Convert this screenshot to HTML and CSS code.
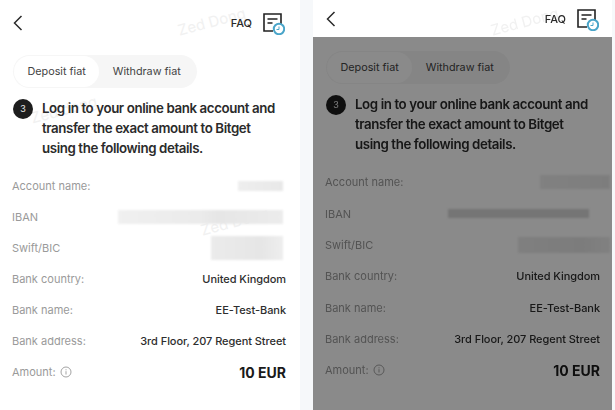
FILE: index.html
```html
<!DOCTYPE html>
<html lang="en">
<head>
  <meta charset="utf-8">
  <meta name="viewport" content="width=device-width, initial-scale=1">
  <title>Deposit fiat</title>
  <link rel="stylesheet" href="styles.css">
</head>
<body>
  <div class="screens">
    <div class="phone phone-plain">
      <span class="mark mark-a">Zed Dong</span>
      <span class="mark mark-b">Zed dong</span>
      <span class="mark mark-c">Zed Dong</span>
      <div class="header">
        <svg class="back" width="10" height="16" viewBox="0 0 10 16"><path d="M8.5 1 1.5 8l7 7" fill="none" stroke="#2a2a2a" stroke-width="1.5"/></svg>
        <div class="header-right">
          <span class="faq">FAQ</span>
          <svg class="orders" width="24" height="24" viewBox="0 0 24 24">
            <path d="M12 20H3V3h17v11" fill="none" stroke="#222" stroke-width="1.6"/>
            <path d="M6.5 8h10M6.5 12h5" fill="none" stroke="#222" stroke-width="1.6"/>
            <circle cx="18" cy="18" r="5.2" fill="#fff" stroke="#4aa5c9" stroke-width="2"/>
            <path d="M18 15.5v3h-2.5" fill="none" stroke="#4aa5c9" stroke-width="1"/>
          </svg>
        </div>
      </div>
      <div class="content">
        <div class="tabs">
          <div class="tab tab-active">Deposit fiat</div>
          <div class="tab">Withdraw fiat</div>
        </div>
        <div class="step">
          <span class="step-num">3</span>
          <h2>Log in to your online bank account and transfer the exact amount to Bitget using the following details.</h2>
        </div>
        <div class="details">
          <div class="row"><span class="label">Account name:</span><span class="blur blur-name"></span></div>
          <div class="row"><span class="label">IBAN</span><span class="blur blur-iban"></span></div>
          <div class="row"><span class="label">Swift/BIC</span><span class="blur blur-swift"></span></div>
          <div class="row"><span class="label">Bank country:</span><span class="value">United Kingdom</span></div>
          <div class="row"><span class="label">Bank name:</span><span class="value">EE-Test-Bank</span></div>
          <div class="row"><span class="label">Bank address:</span><span class="value">3rd Floor, 207 Regent Street</span></div>
          <div class="row">
            <span class="label">Amount:
              <svg class="info" width="12" height="12" viewBox="0 0 12 12"><circle cx="6" cy="6" r="5" fill="none" stroke="#999" stroke-width=".9"/><path d="M6 5.2v3.3M6 3.3v1" fill="none" stroke="#999" stroke-width=".9"/></svg>
            </span>
            <span class="value value-big">10 EUR</span>
          </div>
        </div>
      </div>
    </div>

    <div class="phone phone-dimmed">
      <span class="mark mark-a">Zed Dong</span>
      <div class="header">
        <svg class="back" width="10" height="16" viewBox="0 0 10 16"><path d="M8.5 1 1.5 8l7 7" fill="none" stroke="#2a2a2a" stroke-width="1.5"/></svg>
        <div class="header-right">
          <span class="faq">FAQ</span>
          <svg class="orders" width="24" height="24" viewBox="0 0 24 24">
            <path d="M12 20H3V3h17v11" fill="none" stroke="#222" stroke-width="1.6"/>
            <path d="M6.5 8h10M6.5 12h5" fill="none" stroke="#222" stroke-width="1.6"/>
            <circle cx="18" cy="18" r="5.2" fill="#fff" stroke="#4aa5c9" stroke-width="2"/>
            <path d="M18 15.5v3h-2.5" fill="none" stroke="#4aa5c9" stroke-width="1"/>
          </svg>
        </div>
      </div>
      <div class="content">
        <div class="overlay"></div>
        <div class="tabs">
          <div class="tab tab-active">Deposit fiat</div>
          <div class="tab">Withdraw fiat</div>
        </div>
        <div class="step">
          <span class="step-num">3</span>
          <h2>Log in to your online bank account and transfer the exact amount to Bitget using the following details.</h2>
        </div>
        <div class="details">
          <div class="row"><span class="label">Account name:</span><span class="blur blur-name"></span></div>
          <div class="row"><span class="label">IBAN</span><span class="blur blur-iban"></span></div>
          <div class="row"><span class="label">Swift/BIC</span><span class="blur blur-swift"></span></div>
          <div class="row"><span class="label">Bank country:</span><span class="value">United Kingdom</span></div>
          <div class="row"><span class="label">Bank name:</span><span class="value">EE-Test-Bank</span></div>
          <div class="row"><span class="label">Bank address:</span><span class="value">3rd Floor, 207 Regent Street</span></div>
          <div class="row">
            <span class="label">Amount:
              <svg class="info" width="12" height="12" viewBox="0 0 12 12"><circle cx="6" cy="6" r="5" fill="none" stroke="#999" stroke-width=".9"/><path d="M6 5.2v3.3M6 3.3v1" fill="none" stroke="#999" stroke-width=".9"/></svg>
            </span>
            <span class="value value-big">10 EUR</span>
          </div>
        </div>
      </div>
    </div>
  </div>
</body>
</html>
```

FILE: styles.css
```css
html, body {
  margin: 0;
  height: 100%;
  overflow: hidden;
}

body {
  background: #f6f8fa;
  font-family: Inter, "Noto Sans", sans-serif;
  color: #2a2a2a;
}

.screens {
  display: flex;
  gap: 13px;
  height: 410px;
  filter: blur(0.35px);
}

.phone {
  position: relative;
  width: 300px;
  height: 410px;
  overflow: hidden;
  background: #fff;
  flex-shrink: 0;
}

.phone-plain {
  padding-top: 4px;
  box-sizing: border-box;
}

.phone-dimmed {
  width: 299px;
}

.mark {
  position: absolute;
  font-size: 15px;
  color: #f1f1f1;
  white-space: nowrap;
  transform: rotate(-15deg);
}

.mark-a {
  left: 177px;
  top: 12px;
}

.mark-b {
  left: 30px;
  top: 100px;
}

.mark-c {
  left: 200px;
  top: 212px;
}

.header {
  position: relative;
  display: flex;
  align-items: center;
  justify-content: space-between;
  height: 37px;
  padding: 0 15px 0 13px;
}

.phone-dimmed .header {
  padding-right: 13px;
}

.back {
  display: block;
}

.header-right {
  display: flex;
  align-items: center;
  gap: 9px;
}

.faq {
  font-size: 11px;
  font-weight: 500;
}

.orders {
  display: block;
}

.content {
  position: relative;
  height: 373px;
  padding: 0 14px 0 12px;
  box-sizing: border-box;
}

.phone-dimmed .content {
  padding: 0 12px 0 12px;
}

.overlay {
  position: absolute;
  inset: 0;
  z-index: 2;
  background: rgba(0, 0, 0, 0.46);
}

.tabs {
  display: inline-flex;
  position: relative;
  top: 14px;
  margin-left: 1px;
  padding: 1px 3px 1px 1px;
  background: #f6f6f6;
  border-radius: 17px;
  font-size: 10.8px;
  color: #444;
}

.tab {
  padding: 0 13.5px;
  height: 31px;
  line-height: 31px;
  border-radius: 16px;
}

.tab-active {
  background: #fff;
}

.step {
  display: flex;
  gap: 9px;
  margin-top: 24px;
  margin-left: 1px;
}

.step-num {
  flex-shrink: 0;
  width: 20px;
  height: 20px;
  margin-top: 1px;
  border-radius: 50%;
  background: #1d1d1d;
  color: #e8e8e8;
  font-size: 9px;
  line-height: 20px;
  text-align: center;
}

.step h2 {
  margin: 0;
  max-width: 240px;
  font-size: 13.3px;
  font-weight: 600;
  line-height: 20px;
  letter-spacing: -0.4px;
  color: #2b2b2b;
}

.details {
  margin-top: 12.5px;
}

.row {
  display: flex;
  align-items: center;
  justify-content: space-between;
  height: 31px;
  font-size: 11px;
}

.phone-dimmed .row {
  height: 31.35px;
}

.label {
  color: #9a9a9a;
  display: flex;
  align-items: center;
  gap: 4px;
}

.value {
  font-weight: 500;
  color: #2e2e2e;
  letter-spacing: -0.06px;
}

.value-big {
  font-size: 14px;
  font-weight: 700;
  color: #1a1a1a;
  letter-spacing: 0;
}

.blur {
  display: block;
  margin-right: 3px;
  filter: blur(1px);
}

.blur-name {
  width: 45px;
  height: 10px;
  background: linear-gradient(90deg, #eee, #e8e8e8);
}

.blur-iban {
  width: 165px;
  height: 14px;
  background: linear-gradient(90deg, #f0f0f0, #ebebeb 50%, #e6e6e6 60%, #ececec);
}

.blur-swift {
  width: 72px;
  height: 24px;
  background: linear-gradient(90deg, #ebebeb, #e6e6e6 70%, #eee);
}

.phone-dimmed .blur-name {
  width: 70px;
  height: 14px;
  margin-right: -10px;
}

.phone-dimmed .blur-iban {
  width: 141px;
  height: 9px;
  margin-right: 11px;
  background: #d8d8d8;
}

.phone-dimmed .blur-swift {
  width: 92px;
  height: 16px;
  margin-right: -10px;
}
```
